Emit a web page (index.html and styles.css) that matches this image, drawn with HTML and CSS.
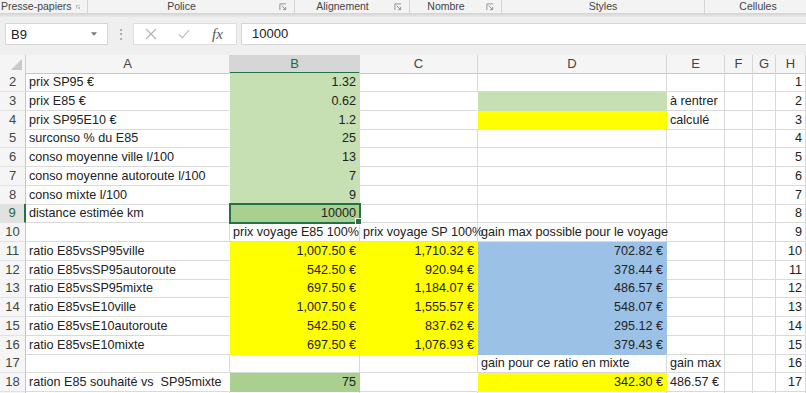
FILE: index.html
```html
<!DOCTYPE html>
<html lang="fr">
<head>
  <meta charset="UTF-8" />
  <title>Calcul E85</title>
  <link rel="stylesheet" href="styles.css">
</head>
<body>

  <div class="ribbon">
    <div class="grp grp-clip"><span class="glabel">Presse-papiers</span><svg class="launch" viewBox="0 0 9 9"><path d="M1 8V1H8" /><path d="M3 3L7.5 7.5M7.5 4.5V7.5H4.5" /></svg></div>
    <div class="grp grp-police"><span class="glabel">Police</span><svg class="launch" viewBox="0 0 9 9"><path d="M1 8V1H8" /><path d="M3 3L7.5 7.5M7.5 4.5V7.5H4.5" /></svg></div>
    <div class="grp grp-align"><span class="glabel">Alignement</span><svg class="launch" viewBox="0 0 9 9"><path d="M1 8V1H8" /><path d="M3 3L7.5 7.5M7.5 4.5V7.5H4.5" /></svg></div>
    <div class="grp grp-num"><span class="glabel">Nombre</span><svg class="launch" viewBox="0 0 9 9"><path d="M1 8V1H8" /><path d="M3 3L7.5 7.5M7.5 4.5V7.5H4.5" /></svg></div>
    <div class="grp grp-styles"><span class="glabel">Styles</span></div>
    <div class="grp grp-cells"><span class="glabel">Cellules</span></div>
  </div>
  <div class="ribbon-edge"></div>

  <div class="fbar">
    <div class="namebox">
      <span>B9</span>
      <svg class="drop" viewBox="0 0 7 4"><path d="M0 0H7L3.5 4Z" /></svg>
    </div>
    <div class="grip">⋮</div>
    <div class="fbuttons">
      <svg class="ficon" viewBox="0 0 12 12"><path d="M1 1L11 11M11 1L1 11" /></svg>
      <svg class="ficon" viewBox="0 0 14 12"><path d="M1 6.5L5 10.5L13 1.5" /></svg>
      <span class="fx">fx</span>
    </div>
    <div class="finput">10000</div>
  </div>

  <div class="sheet">
    <div class="row head">
      <div class="corner"><svg viewBox="0 0 12 12"><path d="M12 0V12H0Z" /></svg></div>
      <div class="ch">A</div>
      <div class="ch on">B</div>
      <div class="ch">C</div>
      <div class="ch">D</div>
      <div class="ch">E</div>
      <div class="ch">F</div>
      <div class="ch">G</div>
      <div class="ch">H</div>
    </div>

    <div class="row">
      <div class="rh">2</div>
      <div class="c">prix SP95 €</div>
      <div class="c g r">1.32</div>
      <div class="c"></div>
      <div class="c"></div>
      <div class="c"></div>
      <div class="c"></div>
      <div class="c"></div>
      <div class="c r">1</div>
    </div>
    <div class="row">
      <div class="rh">3</div>
      <div class="c">prix E85 €</div>
      <div class="c g r">0.62</div>
      <div class="c"></div>
      <div class="c g"></div>
      <div class="c">à rentrer</div>
      <div class="c"></div>
      <div class="c"></div>
      <div class="c r">2</div>
    </div>
    <div class="row">
      <div class="rh">4</div>
      <div class="c">prix SP95E10 €</div>
      <div class="c g r">1.2</div>
      <div class="c"></div>
      <div class="c y"></div>
      <div class="c">calculé</div>
      <div class="c"></div>
      <div class="c"></div>
      <div class="c r">3</div>
    </div>
    <div class="row">
      <div class="rh">5</div>
      <div class="c">surconso % du E85</div>
      <div class="c g r">25</div>
      <div class="c"></div>
      <div class="c"></div>
      <div class="c"></div>
      <div class="c"></div>
      <div class="c"></div>
      <div class="c r">4</div>
    </div>
    <div class="row">
      <div class="rh">6</div>
      <div class="c">conso moyenne ville l/100</div>
      <div class="c g r">13</div>
      <div class="c"></div>
      <div class="c"></div>
      <div class="c"></div>
      <div class="c"></div>
      <div class="c"></div>
      <div class="c r">5</div>
    </div>
    <div class="row">
      <div class="rh">7</div>
      <div class="c">conso moyenne autoroute l/100</div>
      <div class="c g r">7</div>
      <div class="c"></div>
      <div class="c"></div>
      <div class="c"></div>
      <div class="c"></div>
      <div class="c"></div>
      <div class="c r">6</div>
    </div>
    <div class="row">
      <div class="rh">8</div>
      <div class="c">conso mixte l/100</div>
      <div class="c g r">9</div>
      <div class="c"></div>
      <div class="c"></div>
      <div class="c"></div>
      <div class="c"></div>
      <div class="c"></div>
      <div class="c r">7</div>
    </div>
    <div class="row">
      <div class="rh on">9</div>
      <div class="c">distance estimée km</div>
      <div class="c gd r sel">10000</div>
      <div class="c"></div>
      <div class="c"></div>
      <div class="c"></div>
      <div class="c"></div>
      <div class="c"></div>
      <div class="c r">8</div>
    </div>
    <div class="row">
      <div class="rh">10</div>
      <div class="c"></div>
      <div class="c">prix voyage E85 100%</div>
      <div class="c">prix voyage SP 100%</div>
      <div class="c">gain max possible pour le voyage</div>
      <div class="c"></div>
      <div class="c"></div>
      <div class="c"></div>
      <div class="c r">9</div>
    </div>
    <div class="row">
      <div class="rh">11</div>
      <div class="c">ratio E85vsSP95ville</div>
      <div class="c y r">1,007.50 €</div>
      <div class="c y r">1,710.32 €</div>
      <div class="c b r">702.82 €</div>
      <div class="c"></div>
      <div class="c"></div>
      <div class="c"></div>
      <div class="c r">10</div>
    </div>
    <div class="row">
      <div class="rh">12</div>
      <div class="c">ratio E85vsSP95autoroute</div>
      <div class="c y r">542.50 €</div>
      <div class="c y r">920.94 €</div>
      <div class="c b r">378.44 €</div>
      <div class="c"></div>
      <div class="c"></div>
      <div class="c"></div>
      <div class="c r">11</div>
    </div>
    <div class="row">
      <div class="rh">13</div>
      <div class="c">ratio E85vsSP95mixte</div>
      <div class="c y r">697.50 €</div>
      <div class="c y r">1,184.07 €</div>
      <div class="c b r">486.57 €</div>
      <div class="c"></div>
      <div class="c"></div>
      <div class="c"></div>
      <div class="c r">12</div>
    </div>
    <div class="row">
      <div class="rh">14</div>
      <div class="c">ratio E85vsE10ville</div>
      <div class="c y r">1,007.50 €</div>
      <div class="c y r">1,555.57 €</div>
      <div class="c b r">548.07 €</div>
      <div class="c"></div>
      <div class="c"></div>
      <div class="c"></div>
      <div class="c r">13</div>
    </div>
    <div class="row">
      <div class="rh">15</div>
      <div class="c">ratio E85vsE10autoroute</div>
      <div class="c y r">542.50 €</div>
      <div class="c y r">837.62 €</div>
      <div class="c b r">295.12 €</div>
      <div class="c"></div>
      <div class="c"></div>
      <div class="c"></div>
      <div class="c r">14</div>
    </div>
    <div class="row">
      <div class="rh">16</div>
      <div class="c">ratio E85vsE10mixte</div>
      <div class="c y r">697.50 €</div>
      <div class="c y r">1,076.93 €</div>
      <div class="c b r">379.43 €</div>
      <div class="c"></div>
      <div class="c"></div>
      <div class="c"></div>
      <div class="c r">15</div>
    </div>
    <div class="row">
      <div class="rh">17</div>
      <div class="c"></div>
      <div class="c"></div>
      <div class="c"></div>
      <div class="c">gain pour ce ratio en mixte</div>
      <div class="c">gain max</div>
      <div class="c"></div>
      <div class="c"></div>
      <div class="c r">16</div>
    </div>
    <div class="row">
      <div class="rh">18</div>
      <div class="c">ration E85 souhaité vs &nbsp;SP95mixte</div>
      <div class="c gd r">75</div>
      <div class="c"></div>
      <div class="c y r">342.30 €</div>
      <div class="c">486.57 €</div>
      <div class="c"></div>
      <div class="c"></div>
      <div class="c r">17</div>
    </div>
    <div class="row">
      <div class="rh"></div>
      <div class="c"></div>
      <div class="c"></div>
      <div class="c"></div>
      <div class="c"></div>
      <div class="c"></div>
      <div class="c"></div>
      <div class="c"></div>
      <div class="c"></div>
    </div>
  </div>

</body>
</html>
```

FILE: styles.css
```css
body {
  margin: 0;
  width: 806px;
  height: 393px;
  overflow: hidden;
  background: #efefef;
  font-family: 'Liberation Sans', Arial, sans-serif;
  color: #222;
}

/* ribbon group labels */
.ribbon {
  display: flex;
  height: 13px;
  background: #f3f3f3;
  overflow: hidden;
}

.grp {
  display: flex;
  align-items: center;
  flex-shrink: 0;
  border-right: 1px solid #d4d4d4;
  height: 13px;
}

.glabel {
  flex: 1;
  text-align: center;
  white-space: nowrap;
  font-size: 10.5px;
  color: #444;
  line-height: 13px;
}

.launch {
  width: 8px;
  height: 8px;
  margin: 0 7px 0 4px;
  fill: none;
  stroke: #8a8a8a;
  stroke-width: 1;
}

.grp-clip { width: 87px; }
.grp-clip .glabel { text-align: left; padding-left: 1px; }
.grp-police { width: 206px; }
.grp-align { width: 114px; }
.grp-num { width: 91px; }
.grp-styles { width: 202px; }
.grp-cells { width: 106px; border-right: none; }

.ribbon-edge {
  height: 4px;
  background: linear-gradient(#d2d2d2, #e9e9e9);
}

/* formula bar */
.fbar {
  display: flex;
  align-items: stretch;
  height: 22px;
  padding: 6px 0 10px 5px;
  background: #efefef;
}

.namebox {
  width: 103px;
  display: flex;
  align-items: center;
  justify-content: space-between;
  background: #fff;
  border: 1px solid #d6d6d6;
  padding: 0 10px 0 5px;
  font-size: 13px;
  box-sizing: border-box;
}

.drop {
  width: 6px;
  height: 4px;
  fill: #777;
}

.grip {
  width: 25px;
  text-align: center;
  color: #9a9a9a;
  font-size: 14px;
  line-height: 22px;
}

.fbuttons {
  width: 104px;
  display: flex;
  align-items: center;
  gap: 21px;
  padding-left: 11px;
  background: #fff;
  border: 1px solid #dedede;
  box-sizing: border-box;
}

.ficon {
  width: 12px;
  height: 12px;
  fill: none;
  stroke: #b4b4b4;
  stroke-width: 1.2;
}

.fx {
  font-family: 'Liberation Serif', serif;
  font-style: italic;
  font-size: 15px;
  color: #555;
  margin-left: 1px;
}

.finput {
  flex: 1;
  margin-left: 4px;
  background: #fff;
  border: 1px solid #d6d6d6;
  border-right: none;
  font-size: 13px;
  line-height: 20px;
  padding-left: 10px;
}

/* grid */
.sheet {
  background: #fff;
  font-size: 12.6px;
}

.row {
  display: grid;
  grid-template-columns: 26px 204px 130px 118px 189px 58px 28px 23px 30px;
  height: 18.75px;
}

.row.head {
  height: 18px;
  background: #f5f5f5;
}

.corner {
  border-right: 1px solid #d0d0d0;
  border-bottom: 1px solid #c6c6c6;
  display: flex;
  align-items: flex-end;
  justify-content: flex-end;
  padding: 0 3px 3px 0;
}

.corner svg {
  width: 11px;
  height: 11px;
  fill: #c9c9c9;
}

.ch {
  text-align: center;
  color: #444;
  font-size: 13px;
  line-height: 17px;
  border-right: 1px solid #d6d6d6;
  border-bottom: 1px solid #c6c6c6;
}

.ch.on {
  background: #d6d6d6;
  color: #1e6b41;
  border-bottom: 2px solid #217346;
}

.rh {
  background: #f5f5f5;
  color: #444;
  text-align: center;
  font-size: 13px;
  line-height: 18px;
  border-right: 1px solid #c6c6c6;
  border-bottom: 1px solid #e2e2e2;
}

.rh.on {
  background: #e1e1e1;
  color: #1e6b41;
  border-right: 2px solid #217346;
}

.c {
  white-space: nowrap;
  overflow: visible;
  padding: 0 3px;
  line-height: 18px;
  border-right: 1px solid #dadada;
  border-bottom: 1px solid #dadada;
  min-width: 0;
}

.r {
  text-align: right;
  direction: rtl;
  unicode-bidi: plaintext;
}

.c:has(+ .g), .c:has(+ .gd), .c:has(+ .y), .c:has(+ .b) {
  border-right-color: transparent;
}

.g {
  background: #c6e0b4;
  border-color: #c6e0b4;
}

.gd {
  background: #a9d08e;
  border-color: #a9d08e;
}

.y {
  background: #ffff00;
  border-color: #ffff00;
}

.b {
  background: #9bc2e6;
  border-color: #9bc2e6;
}

.sel {
  position: relative;
  outline: 2px solid #217346;
  outline-offset: -1px;
}

.sel::after {
  content: "";
  position: absolute;
  right: -3px;
  bottom: -3px;
  width: 5px;
  height: 5px;
  background: #217346;
  border: 1px solid #fff;
}
```
